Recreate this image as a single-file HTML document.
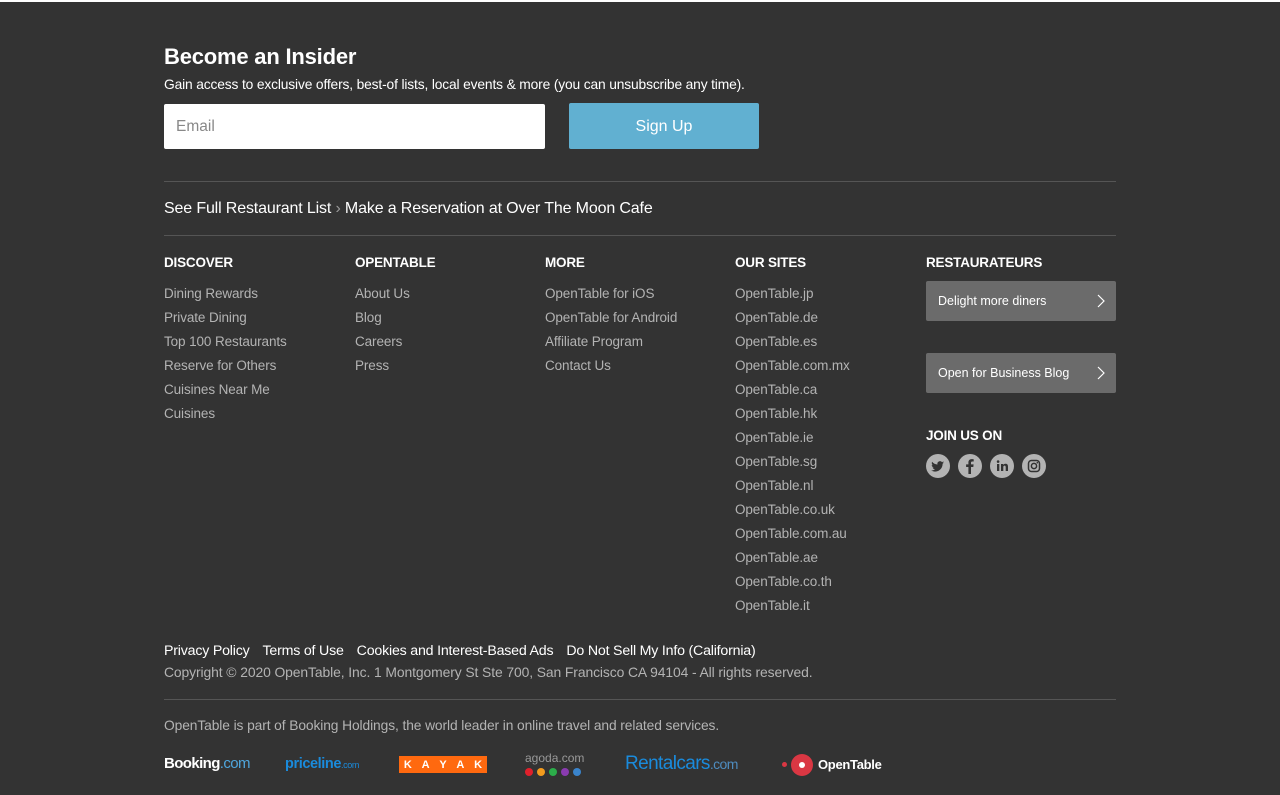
<!DOCTYPE html>
<html><head><meta charset="utf-8"><style>
*{margin:0;padding:0;box-sizing:border-box}
body{width:1280px;height:795px;background:#333;font-family:"Liberation Sans",sans-serif;position:relative;overflow:hidden;color:#fff}
.a{position:absolute;white-space:nowrap}
.top{position:absolute;left:0;top:0;width:1280px;height:2px;background:#fff}
h1{position:absolute;left:164px;top:44px;font-size:22px;font-weight:bold;letter-spacing:-0.2px}
.hr{position:absolute;left:164px;width:952px;height:1px;background:#555}
.col{position:absolute;top:255px}
.col h3{font-size:13.5px;font-weight:bold;height:31px;letter-spacing:-0.2px}
.col div{font-size:13.5px;color:#b3b3b3;height:24px;line-height:16px;letter-spacing:-0.1px}
.btn{position:absolute;left:926px;width:190px;height:40px;background:#6b6b6b;border-radius:2px;font-size:12.5px;color:#fff;padding:13px 0 0 12px}
.btn svg{position:absolute;right:11px;top:13px}
.soc{position:absolute;top:454px;width:24px;height:24px;border-radius:50%;background:#b3b3b3}
.soc svg{position:absolute;left:0;top:0}
.bot a{color:#fff;text-decoration:none;margin-right:13px}
</style></head><body>
<div class="top"></div>
<h1>Become an Insider</h1>
<div class="a" style="left:164px;top:77px;font-size:13.8px;letter-spacing:-0.15px">Gain access to exclusive offers, best-of lists, local events &amp; more (you can unsubscribe any time).</div>
<div class="a" style="left:164px;top:104px;width:381px;height:45px;background:#fff;border-radius:2px;color:#888;font-size:15.5px;padding:14px 0 0 12px">Email</div>
<div class="a" style="left:569px;top:103px;width:190px;height:46px;background:#61b0d1;border-radius:2px;color:#fff;font-size:16px;text-align:center;line-height:48px">Sign Up</div>
<div class="hr" style="top:181px"></div>
<div class="a" style="left:164px;top:200px;font-size:16px;letter-spacing:-0.15px">See Full Restaurant List <span style="color:#999">›</span> Make a Reservation at Over The Moon Cafe</div>
<div class="hr" style="top:235px"></div>

<div class="col" style="left:164px"><h3>DISCOVER</h3><div>Dining Rewards</div><div>Private Dining</div><div>Top 100 Restaurants</div><div>Reserve for Others</div><div>Cuisines Near Me</div><div>Cuisines</div></div>
<div class="col" style="left:355px"><h3>OPENTABLE</h3><div>About Us</div><div>Blog</div><div>Careers</div><div>Press</div></div>
<div class="col" style="left:545px"><h3>MORE</h3><div>OpenTable for iOS</div><div>OpenTable for Android</div><div>Affiliate Program</div><div>Contact Us</div></div>
<div class="col" style="left:735px"><h3>OUR SITES</h3><div>OpenTable.jp</div><div>OpenTable.de</div><div>OpenTable.es</div><div>OpenTable.com.mx</div><div>OpenTable.ca</div><div>OpenTable.hk</div><div>OpenTable.ie</div><div>OpenTable.sg</div><div>OpenTable.nl</div><div>OpenTable.co.uk</div><div>OpenTable.com.au</div><div>OpenTable.ae</div><div>OpenTable.co.th</div><div>OpenTable.it</div></div>
<div class="col" style="left:926px"><h3>RESTAURATEURS</h3></div>
<div class="btn" style="top:281px">Delight more diners<svg width="8" height="14"><path d="M1 1l6 6-6 6" stroke="#fff" fill="none" stroke-width="1.2"/></svg></div>
<div class="btn" style="top:353px">Open for Business Blog<svg width="8" height="14"><path d="M1 1l6 6-6 6" stroke="#fff" fill="none" stroke-width="1.2"/></svg></div>
<div class="a" style="left:926px;top:428px;font-size:13.5px;font-weight:bold;letter-spacing:-0.2px">JOIN US ON</div>
<div class="soc" style="left:926px"><svg width="24" height="24" viewBox="0 0 24 24"><path d="M18 8.5c-.5.2-1 .4-1.5.4.6-.3 1-.9 1.2-1.5-.5.3-1.1.5-1.7.7a2.6 2.6 0 0 0-4.5 2.4c-2.2-.1-4.1-1.2-5.4-2.8-.7 1.2-.3 2.700.8 3.500-.4 0-.8-.1-1.2-.3 0 1.300.9 2.400 2.100 2.600-.4.1-.8.1-1.200 0 .3 1.100 1.300 1.800 2.400 1.800-1.100.9-2.500 1.300-3.900 1.100 1.200.8 2.600 1.200 4 1.200 4.900 0 7.600-4.100 7.500-7.800.5-.4 1-.9 1.400-1.300z" fill="#333"/></svg></div>
<div class="soc" style="left:958px"><svg width="24" height="24" viewBox="0 0 24 24"><path d="M13 20v-7h2.300l.3-2.600H13V8.800c0-.8.2-1.300 1.300-1.300h1.400V5.200c-.3 0-1.100-.1-2-.1-2 0-3.300 1.200-3.300 3.400v1.900H8.100V13h2.300v7z" fill="#333"/></svg></div>
<div class="soc" style="left:990px"><svg width="24" height="24" viewBox="0 0 24 24"><rect x="7" y="10" width="2.300" height="7" fill="#333"/><circle cx="8.1" cy="7.6" r="1.300" fill="#333"/><path d="M11 10h2.200v1c.4-.7 1.200-1.200 2.300-1.200 2 0 2.500 1.300 2.500 3V17h-2.300v-3.800c0-.9-.2-1.600-1.100-1.600-1 0-1.300.7-1.300 1.600V17H11z" fill="#333"/></svg></div>
<div class="soc" style="left:1022px"><svg width="24" height="24" viewBox="0 0 24 24"><rect x="6.500" y="6.500" width="11" height="11" rx="3" fill="none" stroke="#333" stroke-width="1.500"/><circle cx="12" cy="12" r="2.600" fill="none" stroke="#333" stroke-width="1.500"/><circle cx="15.300" cy="8.700" r=".8" fill="#333"/></svg></div>

<div class="a bot" style="left:164px;top:643px;font-size:14.2px;letter-spacing:-0.2px"><a>Privacy Policy</a><a>Terms of Use</a><a>Cookies and Interest-Based Ads</a><a>Do Not Sell My Info (California)</a></div>
<div class="a" style="left:164px;top:664px;font-size:13.9px;color:#b3b3b3;letter-spacing:-0.1px">Copyright © 2020 OpenTable, Inc. 1 Montgomery St Ste 700, San Francisco CA 94104 - All rights reserved.</div>
<div class="hr" style="top:699px"></div>
<div class="a" style="left:164px;top:718px;font-size:13.8px;color:#b3b3b3;letter-spacing:-0.1px">OpenTable is part of Booking Holdings, the world leader in online travel and related services.</div>

<div class="a" style="left:164px;top:755px;font-size:15px;font-weight:bold;letter-spacing:-0.6px">Booking<span style="color:#4fa6dd;font-weight:normal">.com</span></div>
<div class="a" style="left:285px;top:756px;font-size:14.5px;font-weight:bold;color:#1a8bdc;letter-spacing:-0.4px">priceline<span style="font-size:9px;font-weight:normal">.com</span></div>
<div class="a" style="left:399px;top:756px;width:88px;height:17px;background:#ff690f;display:flex;justify-content:space-around;align-items:center;font-size:11px;font-weight:bold;color:#fff"><span>K</span><span>A</span><span>Y</span><span>A</span><span>K</span></div>
<div class="a" style="left:525px;top:751px;font-size:12px;color:#999">agoda.com</div>
<div class="a" style="left:525px;top:768px;display:flex;gap:4px"><i style="width:8px;height:8px;border-radius:50%;background:#e0202b"></i><i style="width:8px;height:8px;border-radius:50%;background:#f29b1e"></i><i style="width:8px;height:8px;border-radius:50%;background:#2cad4a"></i><i style="width:8px;height:8px;border-radius:50%;background:#8a3bb0"></i><i style="width:8px;height:8px;border-radius:50%;background:#3a84cc"></i></div>
<div class="a" style="left:625px;top:753px;font-size:19px;color:#1a8bdc;letter-spacing:-0.6px">Rentalcars<span style="font-size:14px;color:#4e8cbf">.com</span></div>
<div class="a" style="left:782px;top:762px;width:5px;height:5px;border-radius:50%;background:#da3743"></div>
<div class="a" style="left:791px;top:754px;width:22px;height:22px;border-radius:50%;background:#da3743"><i style="position:absolute;left:8px;top:8px;width:6px;height:6px;border-radius:50%;background:#fff"></i></div>
<div class="a" style="left:818px;top:757px;font-size:13px;font-weight:bold;letter-spacing:-0.3px">OpenTable</div>
</body></html>
